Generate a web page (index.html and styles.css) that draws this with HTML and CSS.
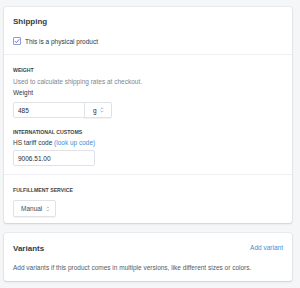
FILE: index.html
```html
<!doctype html>
<html lang="en">
  <head>
    <meta charset="UTF-8" />
    <meta name="viewport" content="width=device-width, initial-scale=1.0" />
    <title>Shipping</title>
    <link rel="stylesheet" href="styles.css">
  </head>
  <body>
    <div class="card">
      <div class="section">
        <h2 class="card-title">Shipping</h2>
        <label class="check-row">
          <span class="checkbox">
            <svg width="6" height="6" viewBox="0 0 6 6"><path d="M1 3.2 L2.4 4.6 L5 1.6" fill="none" stroke="#5c6ac4" stroke-width="0.9" stroke-linecap="round" stroke-linejoin="round"/></svg>
          </span>
          <span>This is a physical product</span>
        </label>
      </div>
      <div class="section">
        <h3 class="sub-title">Weight</h3>
        <p class="help">Used to calculate shipping rates at checkout.</p>
        <span class="label">Weight</span>
        <div class="weight-row">
          <div class="input weight-input">485</div>
          <div class="select unit-select">
            <span>g</span>
            <svg class="arrows" width="4" height="6" viewBox="0 0 4 6"><path d="M0.6 2.2 L2 0.8 L3.4 2.2 M0.6 3.8 L2 5.2 L3.4 3.8" fill="none" stroke="#919eab" stroke-width="0.7"/></svg>
          </div>
        </div>
        <h3 class="sub-title customs">International customs</h3>
        <span class="label tariff">HS tariff code <a href="#">(look up code)</a></span>
        <div class="input tariff-input">9006.51.00</div>
      </div>
      <div class="section last">
        <h3 class="sub-title">Fulfillment service</h3>
        <div class="select service-select">
          <span>Manual</span>
          <svg class="arrows" width="4" height="6" viewBox="0 0 4 6"><path d="M0.6 2.2 L2 0.8 L3.4 2.2 M0.6 3.8 L2 5.2 L3.4 3.8" fill="none" stroke="#919eab" stroke-width="0.7"/></svg>
        </div>
      </div>
    </div>
    <div class="card variants">
      <div class="section">
        <div class="card-header">
          <h2 class="card-title">Variants</h2>
          <a href="#">Add variant</a>
        </div>
        <p class="help dark">Add variants if this product comes in multiple versions, like different sizes or colors.</p>
      </div>
    </div>
  </body>
</html>
```

FILE: styles.css
```css
* {
  margin: 0;
  padding: 0;
  box-sizing: border-box;
}
body {
  background-color: #f4f6f8;
  color: #2e3740;
  font-family: "Liberation Sans", Arial, sans-serif;
  font-size: 6.5px;
  padding: 7px 8px 0 4px;
  height: 288px;
  overflow: hidden;
}
a {
  color: #3d8fd6;
  text-decoration: none;
}
.card {
  width: 288px;
  background-color: #fff;
  border-radius: 3px;
  box-shadow: 0 0 0 1px rgba(63, 63, 68, 0.05), 0 1px 2px rgba(63, 63, 68, 0.15);
}
.section {
  padding: 9px 9px 8px;
  border-bottom: 1px solid #eef0f3;
}
.section.last {
  border-bottom: 0;
  padding-bottom: 6px;
}
.card-title {
  font-size: 8px;
  font-weight: 600;
  line-height: 12px;
  color: #333b44;
}
.check-row {
  display: flex;
  align-items: center;
  gap: 4px;
  height: 10px;
  margin-top: 8px;
}
.checkbox {
  width: 8px;
  height: 8px;
  border: 1px solid #8e9bd8;
  border-radius: 1px;
  display: flex;
  align-items: center;
  justify-content: center;
}
.sub-title {
  font-size: 5.2px;
  font-weight: 600;
  text-transform: uppercase;
  line-height: 8px;
  margin-top: 2px;
  color: #3a434c;
}
.help {
  color: #7a8692;
  line-height: 10px;
  margin-top: 3px;
}
.help.dark {
  color: #525c66;
  margin-top: 8px;
}
.label {
  display: block;
  line-height: 10px;
  margin-top: 1px;
}
.weight-row {
  display: flex;
  margin-top: 4px;
}
.input,
.select {
  height: 16px;
  border: 1px solid #dfe3e8;
  border-radius: 2px;
  display: flex;
  align-items: center;
  padding: 0 4px;
  color: #212b36;
}
.weight-input {
  width: 72px;
  border-radius: 2px 0 0 2px;
}
.unit-select {
  width: 28px;
  margin-left: -1px;
  border-radius: 0 2px 2px 0;
  justify-content: space-between;
  padding: 0 7px 0 8px;
  box-shadow: 0 1px 0 rgba(22, 29, 37, 0.05);
}
.customs {
  margin-top: 10px;
}
.tariff {
  margin-top: 2px;
}
.tariff-input {
  width: 82px;
  margin-top: 2px;
}
.service-select {
  width: 43px;
  height: 17px;
  margin-top: 6px;
  padding: 0 5px 0 7px;
  gap: 4px;
  color: #454f5b;
  box-shadow: 0 1px 0 rgba(22, 29, 37, 0.05);
}
.variants {
  margin-top: 10px;
}
.variants .section {
  padding: 10px 9px 8px;
  border-bottom: 0;
}
.card-header {
  display: flex;
  justify-content: space-between;
  align-items: center;
}
.card-header a {
  margin-top: -3px;
}
```
